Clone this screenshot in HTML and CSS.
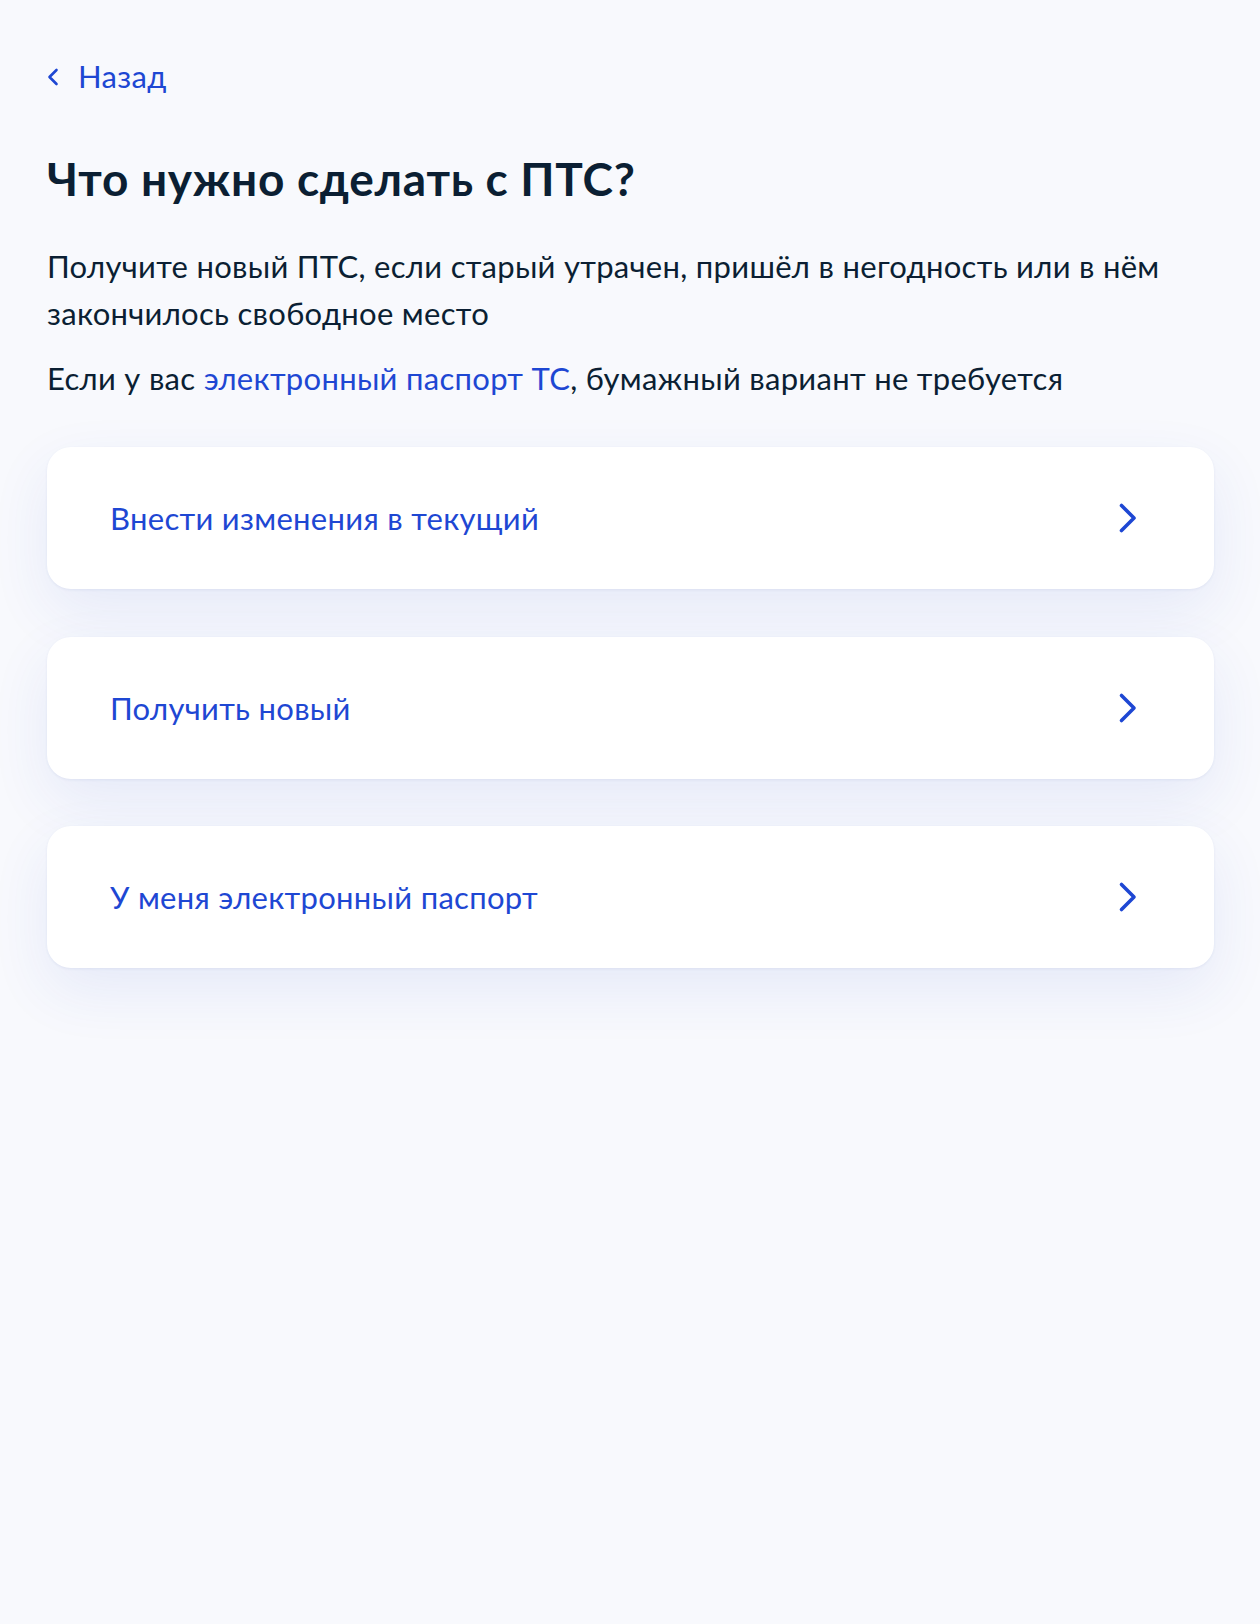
FILE: index.html
```html
<!DOCTYPE html>
<html lang="ru">
<head>
    <meta charset="UTF-8">
    <meta name="viewport" content="width=device-width, initial-scale=1.0">
    <title>Что нужно сделать с ПТС?</title>
    <link rel="stylesheet" href="styles.css">
</head>
<body>
    <div class="page">
        <a class="back-link" href="#">
            <svg class="back-icon" width="12" height="18" viewBox="0 0 12 18" aria-hidden="true">
                <path d="M9.5 2 L2.5 9 L9.5 16" />
            </svg>
            <span>Назад</span>
        </a>

        <h1 class="title">Что нужно сделать с ПТС?</h1>

        <p class="lead">Получите новый ПТС, если старый утрачен, пришёл в негодность или в нём закончилось свободное место</p>
        <p class="lead">Если у вас <a href="#" class="inline-link">электронный паспорт ТС</a>, бумажный вариант не требуется</p>

        <!-- Choice cards -->
        <div class="choices">
            <a class="choice" href="#">
                <span class="choice-text">Внести изменения в текущий</span>
                <svg class="choice-arrow" width="20" height="32" viewBox="0 0 20 32" aria-hidden="true">
                    <path d="M3.5 3.5 L16 16 L3.5 28.5" />
                </svg>
            </a>
            <a class="choice" href="#">
                <span class="choice-text">Получить новый</span>
                <svg class="choice-arrow" width="20" height="32" viewBox="0 0 20 32" aria-hidden="true">
                    <path d="M3.5 3.5 L16 16 L3.5 28.5" />
                </svg>
            </a>
            <a class="choice" href="#">
                <span class="choice-text">У меня электронный паспорт</span>
                <svg class="choice-arrow" width="20" height="32" viewBox="0 0 20 32" aria-hidden="true">
                    <path d="M3.5 3.5 L16 16 L3.5 28.5" />
                </svg>
            </a>
        </div>
    </div>
</body>
</html>
```

FILE: styles.css
```css
body {
    margin: 0;
    background-color: #f8f9fd;
    color: #0b1f33;
    font-family: Lato, "Noto Sans", sans-serif;
    min-height: 100vh;
}

.page {
    padding: 58px 46px 0 47px;
}

/* Back link */
.back-link {
    display: inline-flex;
    align-items: center;
    gap: 19px;
    color: #1e47d3;
    text-decoration: none;
    font-size: 31px;
    line-height: 36px;
    letter-spacing: 0.3px;
}

.back-icon {
    margin-top: 2px;
}

.back-icon path {
    fill: none;
    stroke: #1e47d3;
    stroke-width: 2.6;
    stroke-linecap: round;
    stroke-linejoin: round;
}

.title {
    margin: 57px 0 0;
    font-size: 46px;
    line-height: 56px;
    font-weight: 700;
    letter-spacing: 0.7px;
}

.lead {
    margin: 36px 0 0;
    font-size: 31px;
    line-height: 47px;
    letter-spacing: 0.3px;
}

.lead + .lead {
    margin-top: 18px;
}

.inline-link {
    color: #1e47d3;
    text-decoration: none;
}

/* Choice cards */
.choices {
    display: flex;
    flex-direction: column;
    gap: 47.5px;
    margin-top: 45px;
}

.choice {
    display: flex;
    align-items: center;
    justify-content: space-between;
    height: 142px;
    padding: 0 76px 0 63px;
    background-color: #fff;
    border-radius: 24px;
    box-shadow: 0 1px 3px rgba(30, 60, 140, 0.07), 0 22px 60px rgba(40, 80, 200, 0.09);
    text-decoration: none;
}

.choice-text {
    color: #1e47d3;
    font-size: 31px;
    line-height: 36px;
    letter-spacing: 0.3px;
}

.choice-arrow path {
    fill: none;
    stroke: #1e47d3;
    stroke-width: 3.6;
    stroke-linecap: round;
    stroke-linejoin: round;
}
```
